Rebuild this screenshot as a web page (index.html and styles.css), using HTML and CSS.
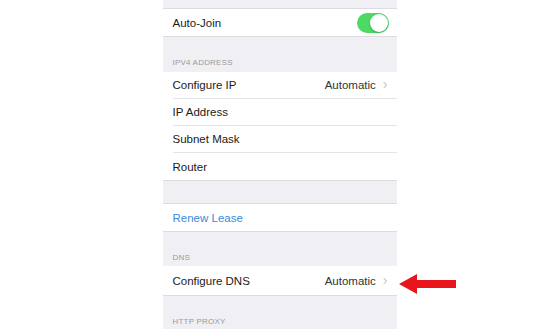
FILE: index.html
```html
<!DOCTYPE html>
<html>
<head>
  <meta charset="utf-8">
  <title>Wi-Fi</title>
  <link rel="stylesheet" href="styles.css">
</head>
<body>
  <div id="stage">
    <div id="screen">
      <div class="spacer top"></div>

      <div class="group">
        <div class="row">
          <span class="title">Auto-Join</span>
          <span class="toggle on"><span class="knob"></span></span>
        </div>
      </div>

      <div class="section-label tall">IPV4 ADDRESS</div>
      <div class="group">
        <div class="row">
          <span class="title">Configure IP</span>
          <span class="detail">Automatic <span class="chevron">&#x203A;</span></span>
        </div>
        <div class="row"><span class="title">IP Address</span></div>
        <div class="row"><span class="title">Subnet Mask</span></div>
        <div class="row"><span class="title">Router</span></div>
      </div>

      <div class="spacer mid"></div>
      <div class="group">
        <div class="row"><span class="title link">Renew Lease</span></div>
      </div>

      <div class="section-label">DNS</div>
      <div class="group">
        <div class="row tall">
          <span class="title">Configure DNS</span>
          <span class="detail">Automatic <span class="chevron">&#x203A;</span></span>
        </div>
      </div>

      <div class="section-label">HTTP PROXY</div>
    </div>

    <svg class="arrow" width="58" height="22" viewBox="0 0 58 22">
      <polygon points="0,11 18,1 18,7 57,7 57,15 18,15 18,21" fill="#e8161c"/>
    </svg>
  </div>
</body>
</html>
```

FILE: styles.css
```css
* {
  margin: 0;
  padding: 0;
  box-sizing: border-box;
}

body {
  background-color: #fff;
  font-family: "Liberation Sans", Arial, sans-serif;
  width: 560px;
  height: 336px;
  overflow: hidden;
}

#stage {
  position: relative;
  display: flex;
  justify-content: center;
}

#screen {
  width: 234px;
  height: 329px;
  background-color: #efeff4;
  margin-left: -1px;
}

.spacer.top {
  height: 9px;
  border-bottom: 1px solid #dcdce0;
}
.spacer.mid {
  height: 24px;
  border-top: 1px solid #dcdce0;
  border-bottom: 1px solid #dcdce0;
}

.group {
  background-color: #fff;
}

.row {
  height: 27px;
  margin-left: 10px;
  padding-right: 10px;
  display: flex;
  align-items: center;
  justify-content: space-between;
  border-bottom: 1px solid #e4e4e8;
  font-size: 11.5px;
  color: #1a1a1a;
}
.row.tall {
  height: 29px;
}
.group > .row:last-child {
  border-bottom: none;
}

.title.link {
  color: #3a8bd8;
}

.detail {
  color: #333;
  display: flex;
  align-items: center;
}
.chevron {
  color: #c4c4c9;
  font-size: 14px;
  margin-left: 7px;
  margin-right: -1px;
  line-height: 1;
  position: relative;
  top: -1px;
}

.toggle {
  width: 32px;
  height: 20px;
  border-radius: 10px;
  background-color: #4cd964;
  display: flex;
  align-items: center;
  justify-content: flex-end;
  padding: 1px;
  margin-right: -2px;
}
.toggle .knob {
  width: 18px;
  height: 18px;
  border-radius: 50%;
  background-color: #fff;
  box-shadow: 0 1px 2px rgba(0, 0, 0, 0.25);
}

.section-label {
  height: 35px;
  padding: 0 0 4px 10px;
  display: flex;
  align-items: flex-end;
  font-size: 8px;
  color: #9a9a9f;
  letter-spacing: 0.2px;
  border-top: 1px solid #dcdce0;
}
.section-label.tall {
  height: 36px;
  padding-bottom: 5px;
}

.arrow {
  position: absolute;
  left: 399px;
  top: 273px;
}
```
